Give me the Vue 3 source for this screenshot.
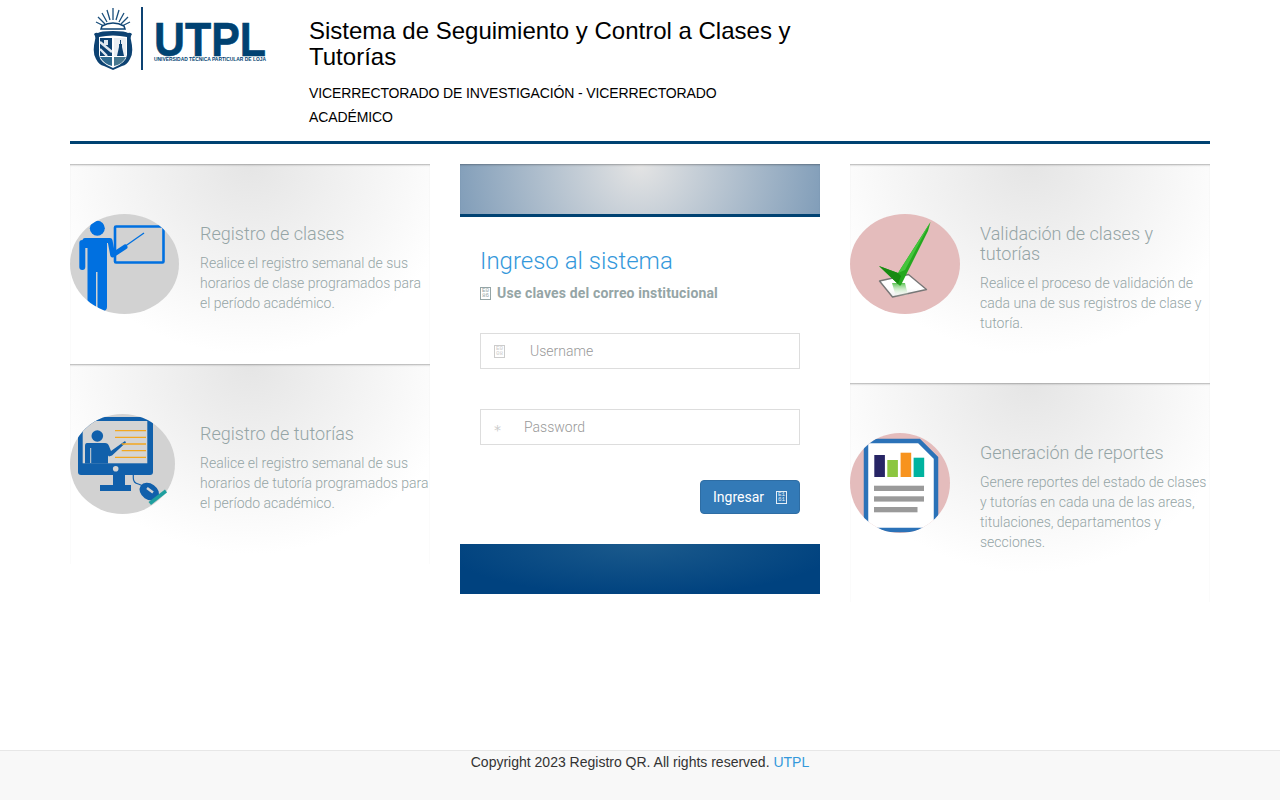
<template>
  <div class="page">
    <div class="container">
      <header class="site-header">
        <div class="logo">
          <svg class="crest" width="50" height="64" viewBox="0 0 50 64">
            <!-- escudo -->
            <g stroke="#1b4f7c" stroke-width="1.300" fill="none">
              <path d="M20 1v12M14 3l3 10M26 3l-3 10M9 6l5 9M31 6l-5 9M5 10l7 7M35 10l-7 7M3 15l8 4M37 15l-8 4" />
            </g>
            <path d="M9 19q11-6 22 0l1 3H8z" fill="#fff" stroke="#0d4272" stroke-width="1.500" />
            <path d="M1 27q2-2 4-1 2-2 15-2t15 2q2-1 4 1-2 3-1 6 3 13-1 19-3 6-8 7l-9 4-9-4q-5-1-8-7-4-6-1-19 1-3-1-6z" fill="#0d4272" />
            <path d="M6 30q14-3 28 0v18q-1 8-14 13-13-5-14-13z" fill="#fff" />
            <path d="M7 31h12v18H7z" fill="#0d4272" />
            <path d="M7 35l12 10M7 42l7 7" stroke="#dfe8ef" stroke-width="2.400" />
            <path d="M11 33h4v5h-4z" fill="#dfe8ef" />
            <path d="M21 31h12v18H21z" fill="#e9eef3" />
            <path d="M24 49l2-9v-3h1v-4h1v4h1v3l2 9z" fill="#0d4272" />
            <path d="M7 50h12v9q-8-2-12-9z" fill="#2f6a8f" />
            <path d="M21 50h12q-3 7-12 9z" fill="#47778f" />
            <rect x="48" y="0" width="2" height="63" fill="#0d4272" />
          </svg>
          <div class="wordmark">
            <div class="logo-big">UTPL</div>
            <div class="logo-small">UNIVERSIDAD TÉCNICA PARTICULAR DE LOJA</div>
          </div>
        </div>
        <div class="titles">
          <h1>Sistema de Seguimiento y Control a Clases y Tutorías</h1>
          <p>VICERRECTORADO DE INVESTIGACIÓN - VICERRECTORADO ACADÉMICO</p>
        </div>
      </header>

      <main class="columns">
        <section class="col">
          <article class="feature">
            <svg class="pic" width="109" height="100" viewBox="0 0 109 100">
              <defs>
                <clipPath id="clip-a"><ellipse cx="54.500" cy="50" rx="54.500" ry="50" /></clipPath>
              </defs>
              <ellipse cx="54.500" cy="50" rx="54.500" ry="50" fill="#d2d2d2" />
              <g clip-path="url(#clip-a)">
                <rect x="45" y="12.500" width="48.500" height="36" rx="1" fill="none" stroke="#0070e0" stroke-width="2.600" />
                <circle cx="27.300" cy="14.300" r="7.500" fill="#0070e0" />
                <path d="M15 24H37V93q0 4-4.500 4h-1q-4 0-4-4V58H26v37l-8.500-3V34H15z" fill="#0070e0" />
                <path d="M12.300 29v24" stroke="#0070e0" stroke-width="6" stroke-linecap="round" />
                <path d="M15 26.500H40l2.700 14.500 12.300-8" fill="none" stroke="#0070e0" stroke-width="5" stroke-linecap="round" stroke-linejoin="round" />
                <path d="M54 33l20-14" stroke="#0070e0" stroke-width="1.300" />
              </g>
            </svg>
            <div class="feature-text">
              <h3>Registro de clases</h3>
              <p>Realice el registro semanal de sus horarios de clase programados para el período académico.</p>
            </div>
          </article>

          <article class="feature">
            <svg class="pic" width="105" height="100" viewBox="0 0 105 100">
              <defs>
                <clipPath id="clip-b"><ellipse cx="52.500" cy="50" rx="52.500" ry="50" /></clipPath>
              </defs>
              <ellipse cx="52.500" cy="50" rx="52.500" ry="50" fill="#d2d2d2" />
              <g clip-path="url(#clip-b)">
                <path d="M8 3h75v55q0 3-3 3H11q-3 0-3-3z" fill="#1160ab" />
                <rect x="12.700" y="7" width="64.600" height="42.300" fill="#d4d4d4" />
                <path d="M43 61h12v10h6v6H30v-6h13z" fill="#1160ab" />
                <circle cx="45.700" cy="54.700" r="2.800" fill="#d4d4d4" />
                <circle cx="27.300" cy="22" r="5.800" fill="#1160ab" />
                <path d="M17 29h18q3 0 4 3l2 5 14-10 1 1.500-14 13-3 1-1-1v8H15V32q0-3 2-3z" fill="#1160ab" />
                <path d="M20.700 34v15" stroke="#d4d4d4" stroke-width="1" />
                <path d="M45 16.700h31M45 23.300h31M51.700 30H76M51.700 36.700H76M45 43.300h31" stroke="#f2a71f" stroke-width="1.300" />
              </g>
              <path d="M63.300 61v3q0 5 5 6l5 2" fill="none" stroke="#1160ab" stroke-width="1.200" />
              <ellipse cx="79.300" cy="77.700" rx="10.500" ry="8" transform="rotate(35 79.300 77.700)" fill="#1160ab" />
              <path d="M77 74l6 4.500" stroke="#d4d4d4" stroke-width="2.500" />
              <path d="M95 75.500l2 3-16 12.500-2.500-3z" fill="#1f9f9f" />
            </svg>
            <div class="feature-text">
              <h3>Registro de tutorías</h3>
              <p>Realice el registro semanal de sus horarios de tutoría programados para el período académico.</p>
            </div>
          </article>
        </section>

        <section class="col login">
          <div class="login-top"></div>
          <form class="login-body" @submit.prevent>
            <h2>Ingreso al sistema</h2>
            <p class="hint"><span class="tofu"><span>E0</span><span>86</span></span>Use claves del correo institucional</p>
            <div class="field">
              <span class="tofu tofu-field"><span>E0</span><span>08</span></span>
              <input type="text" placeholder="Username" />
            </div>
            <div class="field field-pass">
              <span class="star">*</span>
              <input type="password" placeholder="Password" />
            </div>
            <div class="actions">
              <button type="submit" class="btn">Ingresar<span class="tofu tofu-btn"><span>E1</span><span>61</span></span></button>
            </div>
          </form>
          <div class="login-bottom"></div>
        </section>

        <section class="col">
          <article class="feature">
            <svg class="pic" width="110" height="100" viewBox="0 0 110 100">
              <defs>
                <linearGradient id="paper" x1="0" y1="0" x2="0" y2="1">
                  <stop offset="0" stop-color="#fff" />
                  <stop offset="0.6" stop-color="#fff" />
                  <stop offset="1" stop-color="#f0f0f0" />
                </linearGradient>
                <linearGradient id="shade" x1="0" y1="0" x2="0" y2="1">
                  <stop offset="0" stop-color="#5cc254" />
                  <stop offset="1" stop-color="#fff" stop-opacity="0" />
                </linearGradient>
              </defs>
              <ellipse cx="55" cy="50" rx="55" ry="50" fill="#e4bcbc" />
              <path d="M29.500 67l29-6.500 18 15-34 7.500z" fill="url(#paper)" stroke="#777" stroke-width="1.400" stroke-linejoin="round" />
              <path d="M42 69h13l3 12-12 2z" fill="url(#shade)" />
              <path d="M29 52l19 7L80.500 8l-2.500 9-27 54q-1 1-2 0z" fill="#25a81f" />
              <path d="M29 52l19 7 3 3-3 8z" fill="#178a12" />
              <path d="M48 59L80.500 8 55 56z" fill="#45c53c" />
            </svg>
            <div class="feature-text">
              <h3>Validación de clases y tutorías</h3>
              <p>Realice el proceso de validación de cada una de sus registros de clase y tutoría.</p>
            </div>
          </article>

          <article class="feature">
            <svg class="pic" width="100" height="100" viewBox="0 0 100 100">
              <defs>
                <clipPath id="clip-d"><circle cx="50" cy="50" r="50" /></clipPath>
              </defs>
              <circle cx="50" cy="50" r="50" fill="#e4bcbc" />
              <g clip-path="url(#clip-d)">
                <path d="M16 8h53l17 17v72H16z" fill="#fff" stroke="#2b72b8" stroke-width="4.500" />
                <rect x="24.300" y="22" width="10.600" height="22" fill="#272565" />
                <rect x="37.300" y="27" width="10.600" height="17" fill="#8cc63f" />
                <rect x="50.600" y="19.700" width="10.600" height="24.300" fill="#f7931e" />
                <rect x="63.600" y="24.700" width="10.600" height="19.300" fill="#00b39f" />
                <rect x="24" y="52.700" width="50" height="5.300" fill="#9a9a9a" />
                <rect x="24" y="63.300" width="50" height="5.300" fill="#9a9a9a" />
                <rect x="24" y="74" width="43.500" height="5.300" fill="#9a9a9a" />
              </g>
            </svg>
            <div class="feature-text">
              <h3>Generación de reportes</h3>
              <p>Genere reportes del estado de clases y tutorías en cada una de las areas, titulaciones, departamentos y secciones.</p>
            </div>
          </article>
        </section>
      </main>
    </div>

    <footer class="site-footer">
      Copyright 2023 Registro QR. All rights reserved. <a href="#">UTPL</a>
    </footer>
  </div>
</template>

<script setup>
</script>

<style>
html, body {
  margin: 0;
  padding: 0;
  background: #fff;
}
</style>

<style scoped>
.page {
  display: flex;
  flex-direction: column;
  min-height: 100vh;
  font-family: Roboto, "Liberation Sans", sans-serif;
  font-size: 14px;
  color: #333;
}

.container {
  width: 1140px;
  margin: 0 auto;
}

/* cabecera */
.site-header {
  display: flex;
  height: 141px;
  border-bottom: 3px solid #004272;
  color: #000;
  font-family: "Liberation Sans", Arial, sans-serif;
}

.logo {
  display: flex;
  align-items: flex-start;
  width: 239px;
  flex: none;
  box-sizing: border-box;
  padding: 7px 0 0 23px;
}

.crest {
  display: block;
  flex: none;
}

.wordmark {
  margin-left: 11px;
  padding-top: 14px;
  font-weight: 700;
  color: #004272;
  white-space: nowrap;
}

.logo-big {
  height: 36px;
  font-size: 49px;
  line-height: 36px;
  -webkit-text-stroke: 0.6px #004272;
  transform: scaleX(0.875);
  transform-origin: left center;
}

.logo-small {
  font-size: 4.900px;
  line-height: 6px;
}

.titles {
  width: 500px;
  padding-top: 18px;
}

.titles h1 {
  margin: 0;
  font-size: 24px;
  line-height: 26px;
  font-weight: 400;
}

.titles p {
  margin: 11px 0 0;
  width: 450px;
  font-size: 14px;
  line-height: 24px;
  letter-spacing: -0.12px;
}

/* columnas */
.columns {
  display: flex;
  gap: 30px;
  margin-top: 20px;
}

.col {
  width: 360px;
  flex: none;
}

.feature {
  display: grid;
  grid-template-columns: 130px 1fr;
  padding: 50px 0;
  box-shadow: inset 0 2px 2px -1px rgba(0, 0, 0, 0.3);
  background: radial-gradient(ellipse 210px 190px at 50% 0, #e5e5e5, #fff);
}

.pic {
  display: block;
}

.feature-text {
  padding-top: 10px;
}

.feature-text h3 {
  margin: 0 0 9px;
  font-size: 18px;
  line-height: 20px;
  font-weight: 300;
  color: #95a5a6;
}

.feature-text p {
  margin: 0;
  font-size: 14px;
  line-height: 20px;
  font-weight: 300;
  color: #95a5a6;
}

/* login */
.login-top {
  height: 50px;
  border-bottom: 3px solid #004272;
  box-shadow: inset 0 2px 2px -1px rgba(0, 0, 0, 0.3);
  background: radial-gradient(circle 190px at 50% 0, #e4e4e4, #7f9cb8);
}

.login-body {
  padding: 30px 20px;
}

.login-body h2 {
  margin: 1px 0 0;
  font-size: 24px;
  line-height: 27px;
  font-weight: 300;
  color: #3498db;
}

.hint {
  display: flex;
  align-items: center;
  gap: 6px;
  margin: 8px 0 0;
  font-size: 14px;
  line-height: 20px;
  font-weight: 700;
  letter-spacing: 0.15px;
  color: #95a5a6;
}

/* caja de glifo sin fuente */
.tofu {
  display: inline-flex;
  flex-direction: column;
  align-items: center;
  justify-content: center;
  flex: none;
  box-sizing: border-box;
  width: 11px;
  height: 13px;
  border: 1px solid currentColor;
  font: 400 6px/5.500px "Liberation Mono", monospace;
  letter-spacing: 0;
}

.tofu-field {
  margin-right: 25px;
  color: #ccc;
}

.tofu-btn {
  margin-left: 12px;
  color: #e4eef7;
}

.star {
  margin-right: 23px;
  position: relative;
  top: 3px;
  font-family: "DejaVu Sans", sans-serif;
  font-weight: 400;
  line-height: 1;
  color: #ccc;
}

.field {
  display: flex;
  align-items: center;
  height: 36px;
  box-sizing: border-box;
  margin-top: 30px;
  border: 1px solid #ddd;
  padding-left: 13px;
}

.field-pass {
  margin-top: 40px;
}

.field input {
  flex: 1;
  min-width: 0;
  border: 0;
  outline: 0;
  padding: 0;
  font: 300 14px Roboto, sans-serif;
  color: #555;
  background: transparent;
}

.field input::placeholder {
  color: #999;
  opacity: 1;
}

.actions {
  display: flex;
  justify-content: flex-end;
  margin-top: 35px;
}

.btn {
  display: flex;
  align-items: center;
  width: 100px;
  height: 34px;
  box-sizing: border-box;
  padding: 0 0 0 12px;
  border: 1px solid #2e6da4;
  border-radius: 4px;
  background: #337ab7;
  color: #fff;
  font: 400 14px Roboto, sans-serif;
}

.login-bottom {
  height: 50px;
  background: radial-gradient(ellipse 200px 52px at 50% 0, #1b5a8c, #00427f);
}

/* pie */
.site-footer {
  margin-top: auto;
  height: 50px;
  box-sizing: border-box;
  padding-top: 1px;
  border-top: 1px solid #e7e7e7;
  background: #f8f8f8;
  text-align: center;
  font-family: "Liberation Sans", Arial, sans-serif;
  font-size: 14px;
  line-height: 20px;
  color: #333;
}

.site-footer a {
  color: #3498db;
  text-decoration: none;
}
</style>
